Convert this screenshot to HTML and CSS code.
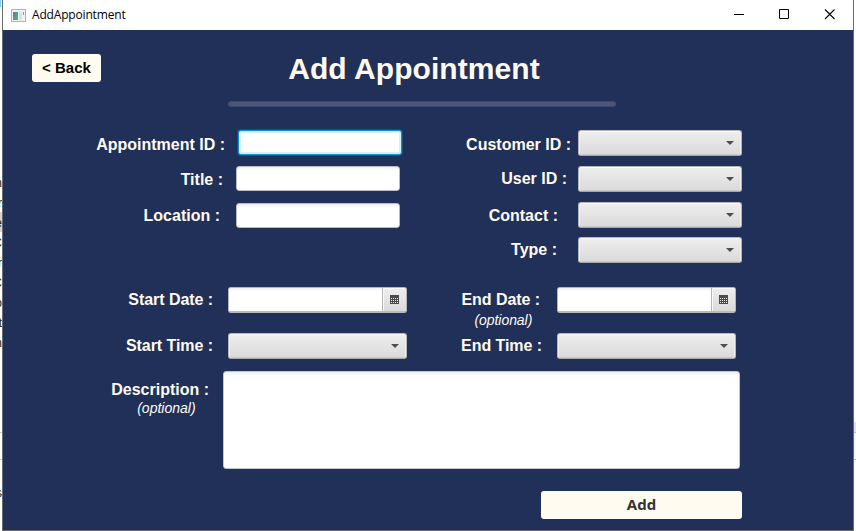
FILE: index.html
```html
<!DOCTYPE html>
<html lang="en">
<head>
<meta charset="utf-8">
<title>AddAppointment</title>
<link rel="stylesheet" href="styles.css">
</head>
<body>
<svg class="defs" width="0" height="0" aria-hidden="true">
  <symbol id="arrow" viewBox="0 0 8 4"><path d="M0 0H8L4 4Z" fill="#4d4d4d"/></symbol>
  <symbol id="calendar" viewBox="0 0 9 9" shape-rendering="crispEdges">
    <path d="M0 0H9V9H0Z" fill="#4b4b4b"/>
    <path d="M1 3.5H8M1 5.5H8M1 7.5H8" stroke="#e6e6e7" stroke-dasharray="1 1"/>
  </symbol>
</svg>
<div class="desktop">
  <div class="strip strip-left">
    <i class="accent"></i>
    <i class="selection"></i>
    <i class="divider first"></i><i class="divider second"></i>
    <div class="code"><span>n</span><span>r</span><span>e</span><span>C</span><span>r</span><span>C</span><span>o</span><span>t</span><span>n</span></div>
    <span class="last">s</span>
  </div>
  <main class="window">
    <header class="titlebar">
      <svg class="app-icon" width="15" height="13" viewBox="0 0 15 13" shape-rendering="crispEdges">
        <path d="M.5 .5H14.5V12.5H.5Z" fill="#f0f1f4" stroke="#aeb4bd"/>
        <path d="M2 3H7V11H2Z" fill="#559b8c"/><path d="M2 3H4V7H2Z" fill="#5583a8"/><path d="M5 7H7V11H5Z" fill="#5ba578"/>
        <path d="M8 3H11V11H8Z" fill="#dedfe4"/><path d="M12 3H13V6H12Z" fill="#77a0ad"/>
      </svg>
      <span class="caption">AddAppointment</span>
      <svg class="controls" width="102" height="12" viewBox="0 0 102 12">
        <path d="M0 5.5H10M45.5 .5H54.5V9.5H45.5Z" fill="none" stroke="#000"/>
        <path d="M91 .5L100.5 10M100.5 .5L91 10" fill="none" stroke="#000" stroke-width="1.1"/>
      </svg>
    </header>
    <section class="view">
      <div class="heading">
        <button class="back">&lt; Back</button>
        <div class="title"><h1>Add Appointment</h1><div class="rule"></div></div>
      </div>
      <div class="details">
        <div class="column left">
          <div class="row appointment"><label>Appointment ID :</label><input class="field focused"></div>
          <div class="row name"><label>Title :</label><input class="field"></div>
          <div class="row location"><label>Location :</label><input class="field"></div>
        </div>
        <div class="column right">
          <div class="row customer"><label>Customer ID :</label><button class="combo"><svg><use href="#arrow"/></svg></button></div>
          <div class="row user"><label>User ID :</label><button class="combo"><svg><use href="#arrow"/></svg></button></div>
          <div class="row contact"><label>Contact :</label><button class="combo"><svg><use href="#arrow"/></svg></button></div>
          <div class="row type"><label>Type :</label><button class="combo"><svg><use href="#arrow"/></svg></button></div>
        </div>
      </div>
      <div class="schedule">
        <div class="column left">
          <div class="row date"><label>Start Date :</label><div class="picker"><input><button><svg><use href="#calendar"/></svg></button></div></div>
          <div class="row time"><label>Start Time :</label><button class="combo wide"><svg><use href="#arrow"/></svg></button></div>
        </div>
        <div class="column right">
          <div class="row date"><label>End Date :<small>(optional)</small></label><div class="picker"><input><button><svg><use href="#calendar"/></svg></button></div></div>
          <div class="row time"><label>End Time :</label><button class="combo wide"><svg><use href="#arrow"/></svg></button></div>
        </div>
      </div>
      <div class="row description"><label>Description :<small>(optional)</small></label><textarea></textarea></div>
      <button class="add">Add</button>
    </section>
  </main>
  <div class="strip strip-right"></div>
</div>
</body>
</html>
```

FILE: styles.css
```css
* { box-sizing: border-box; }
body { margin: 0; overflow: hidden; font-family: "Liberation Sans", Arial, sans-serif; }
button, input, textarea { margin: 0; padding: 0; border: 0; outline: 0; font: inherit; }
.defs { position: absolute; }
.desktop { display: grid; grid-template-columns: 2px 852px 2px; height: 531px; background: #fff; }

.strip { position: relative; overflow: hidden; height: 531px; }
.accent { position: absolute; top: 0; width: 1px; height: 7px; background: #78cdf2; }
.selection { position: absolute; top: 212px; width: 2px; height: 20px; background: #d4d4d4; }
.divider { position: absolute; width: 2px; height: 1px; background: #c8c8c8; }
.first { top: 432px; }
.second { top: 459px; }
.code { position: absolute; top: 173px; right: 0; font: 12px/20px "Liberation Sans", sans-serif; color: #222; }
.code span { display: block; text-align: right; }
.last { position: absolute; top: 486px; right: 0; font-size: 12px; color: #222; }
.strip-right { background: linear-gradient(#fff 422px, #e3dfe3 422px 432px, #bbb 432px 433px, #f6f6f6 433px 459px, #bbb 459px 460px, #fff 460px); }

.window { height: 531px; border: solid #6b6b6e; border-width: 0 1px 1px; background: #213059; }
.titlebar { display: flex; align-items: center; height: 30px; padding-left: 8px; background: #fff; }
.caption { flex: 1; margin-left: 6px; font: 12px/16px "Open Sans", "Noto Sans", sans-serif; letter-spacing: -.17px; color: #000; }
.controls { margin-right: 17px; }

.heading { display: flex; align-items: flex-start; height: 100px; padding: 24px 0 0 29px; }
.back { width: 69px; height: 28px; padding-bottom: 2px; border-radius: 3px; background: #fffbf0; color: #000; font-size: 15px; font-weight: bold; }
.title { width: 388px; margin-left: 127px; }
h1 { margin: -3px 0 0; padding-right: 16px; text-align: center; font-size: 30px; line-height: 36px; letter-spacing: .08px; color: #fffbf0; white-space: nowrap; }
.rule { height: 6px; margin-top: 14px; border: 1px solid #3e4a70; border-radius: 3px; background: #4d5579; }

.details { display: grid; grid-template-columns: 400px 339px; height: 157px; }
.schedule { display: grid; grid-template-columns: 404px 329px; height: 84px; }
.row { display: flex; justify-content: flex-end; align-items: flex-start; }
label { font-size: 16px; line-height: 18px; font-weight: bold; color: #fffbf0; white-space: nowrap; }
small { display: block; font-size: 14px; line-height: 16px; font-weight: normal; font-style: italic; }

.field { width: 164px; height: 25px; border: 1px solid #b9bbc0; border-radius: 3px; background: linear-gradient(#f0eff1, #fff 4px); }
.focused { border-color: #0696d0; box-shadow: 0 0 0 1px #0d6f9f88, inset 0 0 0 2px #d9effa; background: #fff; }
.combo { display: flex; justify-content: flex-end; align-items: center; width: 164px; height: 26px; padding-right: 7px; border: 1px solid #b5b6ba; border-bottom-color: #a8a9ad; border-radius: 3px; background: linear-gradient(#efeeef, #dadadb); box-shadow: inset 0 1px #fafafa, inset 1px 0 #eeeeef, inset -1px 0 #eeeeef, inset 0 -1px #c9c9cb; }
.combo svg { width: 8px; height: 4px; }
.wide { width: 179px; }
.picker { display: flex; width: 179px; height: 26px; border: 1px solid #b5b6ba; border-bottom: 2px solid #b9babd; border-radius: 3px; background: #fff; overflow: hidden; }
.picker input { width: 153px; background: linear-gradient(#f0eff1, #fff 3px); }
.picker button { display: flex; align-items: center; justify-content: center; width: 24px; border-left: 1px solid #b5b6ba; background: linear-gradient(#efeeef, #dadadb); box-shadow: inset 1px 1px #f7f7f8; }
.picker svg { width: 9px; height: 9px; }

.appointment { height: 36px; }
.appointment label { margin: 6px 13px 0 0; }
.name { height: 37px; padding-right: 2px; }
.name label { margin: 5px 13px 0 0; }
.location { padding-right: 2px; }
.location label { margin: 4px 16px 0 0; }
.details .left { padding-right: 1px; }
.customer, .user { height: 36px; }
.contact { height: 35px; }
.customer label { margin: 6px 7px 0 0; }
.user label { margin: 4px 11px 0 0; }
.contact label { margin: 5px 20px 0 0; }
.type label { margin: 4px 21px 0 0; }
.date { height: 46px; }
.date label { margin: 4px 15px 0 0; letter-spacing: -.06px; }
.time label { margin: 4px 15px 0 0; letter-spacing: -.06px; }
.right .date label { margin-right: 17px; }
.right .date small { margin: 3px 0 0 13px; }
.description { width: 737px; height: 120px; }
.description label { margin: 10px 14px 0 0; }
.description small { margin: 1px 0 0 26px; }
textarea { width: 517px; height: 98px; border: 1px solid #c4c5c9; border-radius: 3px; background: linear-gradient(#f0eff1, #fff 4px); resize: none; }
.add { display: block; width: 201px; height: 28px; padding-bottom: 2px; margin-left: 538px; border-radius: 3px; background: #fffbf0; color: #333; font: bold 15px/26px "Open Sans", "Noto Sans", sans-serif; }
```
